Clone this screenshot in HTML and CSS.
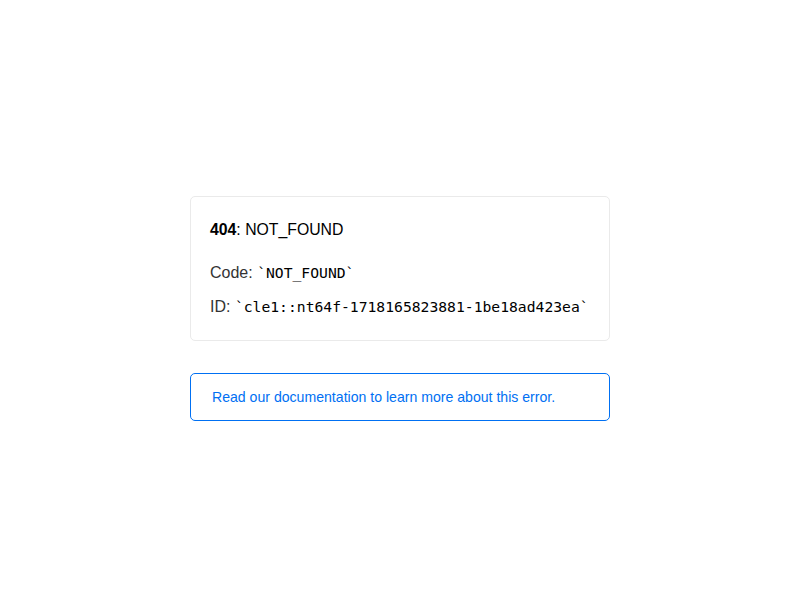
FILE: index.html
```html
<!DOCTYPE html>
<html>
<head>
<meta charset="utf-8">
<title>404: NOT_FOUND</title>
<link rel="stylesheet" href="styles.css">
</head>
<body>
<main class="main">
  <section class="card">
    <p class="title"><strong>404</strong>: NOT_FOUND</p>
    <p class="info">Code: <code class="mono">`NOT_FOUND`</code></p>
    <p class="info info-id">ID: <code class="mono">`cle1::nt64f-1718165823881-1be18ad423ea`</code></p>
  </section>
  <a class="doc-link" href="#">Read our documentation to learn more about this error.</a>
</main>
</body>
</html>
```
FILE: styles.css
```css
html, body {
  margin: 0;
  height: 100%;
  background: #fff;
}
body {
  font-family: "Liberation Sans", Arial, sans-serif;
  display: flex;
  align-items: center;
  justify-content: center;
  padding-top: 17px;
  box-sizing: border-box;
}
.main {
  width: 420px;
  display: flex;
  flex-direction: column;
  gap: 32px;
}
.card {
  border: 1px solid #eaeaea;
  border-radius: 5px;
  padding: 21px 21px 21px 19px;
}
.title {
  margin: 0 0 19px;
  font-size: 15.8px;
  line-height: 24px;
  color: #000;
}
.title strong {
  font-weight: 700;
}
.info {
  margin: 0;
  font-size: 16px;
  line-height: 24px;
  color: #333;
  white-space: nowrap;
}
.info-id {
  margin-top: 10px;
}
.mono {
  font-family: "DejaVu Sans Mono", monospace;
  font-size: 14.7px;
  color: #000;
}
.doc-link {
  display: flex;
  align-items: center;
  height: 46px;
  padding: 0 21px;
  border: 1px solid #0070f3;
  border-radius: 5px;
  color: #0070f3;
  font-size: 14.1px;
  text-decoration: none;
}
```
